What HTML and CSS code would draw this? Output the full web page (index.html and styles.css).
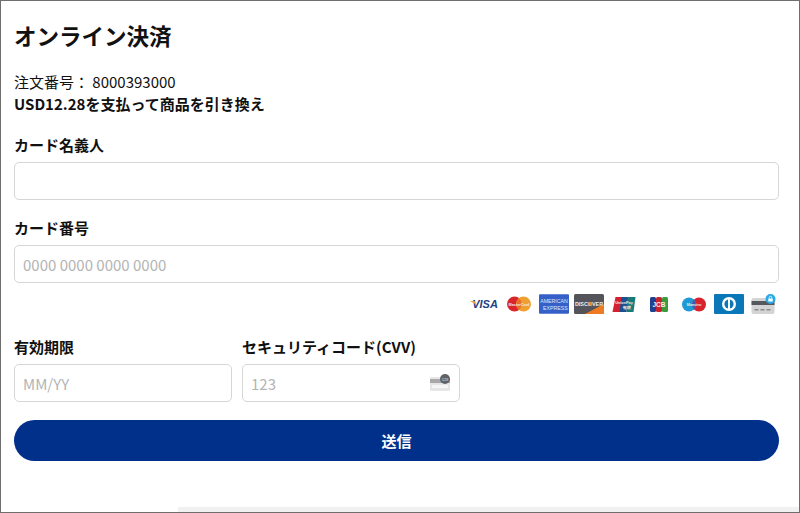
FILE: index.html
```html
<!DOCTYPE html>
<html lang="ja">
<head>
<meta charset="utf-8">
<title>オンライン決済</title>
<link rel="stylesheet" href="styles.css">
</head>
<body>
<div class="frame">
  <form class="form">
    <h1 class="title">オンライン決済</h1>
    <p class="order">注文番号： 8000393000</p>
    <p class="amount">USD12.28を支払って商品を引き換え</p>
    <div class="field field-name">
      <label class="label">カード名義人</label>
      <div class="input"></div>
    </div>
    <div class="field field-number">
      <label class="label">カード番号</label>
      <div class="input"><span class="placeholder">0000 0000 0000 0000</span></div>
    </div>
    <div class="brands">
      <svg class="brand" width="28" height="12" viewBox="0 0 28 12"><text x="15" y="10" text-anchor="middle" class="visa">VISA</text><path d="M0 3h4.500l1.500 3.500z" fill="#e9a23b"/></svg>
      <svg class="brand" width="25" height="16" viewBox="0 0 25 16"><circle cx="8" cy="8" r="7.500" fill="#d9262c"/><circle cx="17" cy="8" r="7.500" fill="#f0a030"/><path d="M12.500 2.200a7.500 7.500 0 0 1 0 11.600a7.500 7.500 0 0 1 0-11.600z" fill="#e8702a"/><text x="12.500" y="9.800" text-anchor="middle" class="tiny fill-light">MasterCard</text></svg>
      <svg class="brand" width="31" height="20" viewBox="0 0 31 20"><rect width="31" height="20" rx="1" fill="#3560c8"/><text x="15.500" y="8.500" text-anchor="middle" class="amex">AMERICAN</text><text x="17" y="16" text-anchor="middle" class="amex">EXPRESS</text></svg>
      <svg class="brand" width="30" height="20" viewBox="0 0 30 20"><rect width="30" height="20" rx="1.500" fill="#54545a"/><path d="M30 10v8.500a1.500 1.500 0 0 1-1.500 1.500H11z" fill="#ee7b22"/><text x="15" y="11.800" text-anchor="middle" class="discover">DISCOVER</text><circle cx="16.500" cy="9.800" r="2" fill="#f08a2c"/></svg>
      <svg class="brand" width="23" height="15" viewBox="0 0 23 15"><path d="M3 0h7l-2 15H0z" fill="#d5202f"/><path d="M9 0h7l-2 15H7z" fill="#1c4f92"/><path d="M15 0h8l-2 15h-7z" fill="#1a7a78"/><text x="11.500" y="6.500" text-anchor="middle" class="tiny fill-light">UnionPay</text><text x="14.500" y="11.500" text-anchor="middle" class="tiny fill-light">银联</text></svg>
      <svg class="brand" width="18" height="15" viewBox="0 0 18 15"><rect width="6" height="15" rx="1.500" fill="#1f3f8f"/><rect x="6" width="6" height="15" rx="1.500" fill="#c8242f"/><rect x="12" width="6" height="15" rx="1.500" fill="#3a9a3c"/><text x="9" y="10" text-anchor="middle" class="jcb">JCB</text></svg>
      <svg class="brand" width="24" height="15" viewBox="0 0 24 15"><circle cx="17" cy="7.500" r="7" fill="#d8232f"/><circle cx="7" cy="7.500" r="7" fill="#1f9ad6"/><path d="M12 2.600a7 7 0 0 1 0 9.800a7 7 0 0 1 0-9.800z" fill="#4a5aa5"/><text x="12" y="9.200" text-anchor="middle" class="tiny fill-light">Maestro</text></svg>
      <svg class="brand" width="30" height="20" viewBox="0 0 30 20"><rect width="30" height="20" rx="1" fill="#0a78b8"/><circle cx="15" cy="10" r="7" fill="#fff"/><circle cx="15" cy="10" r="4.600" fill="#0a78b8"/><rect x="14" y="4" width="2" height="12" fill="#fff"/></svg>
      <svg class="brand" width="25" height="20" viewBox="0 0 25 20"><rect x="0" y="4" width="23" height="16" rx="2" fill="#d4d4d4"/><rect x="0" y="7" width="23" height="4" fill="#55585c"/><rect x="3" y="15" width="4" height="1.500" fill="#8c8c8c"/><rect x="9" y="15" width="4" height="1.500" fill="#8c8c8c"/><rect x="15" y="15" width="4" height="1.500" fill="#8c8c8c"/><circle cx="19" cy="5" r="5" fill="#2aa9e6"/><rect x="16.800" y="4.500" width="4.400" height="3" fill="#fff"/><path d="M17.800 4.500V3.500a1.200 1.200 0 0 1 2.400 0v1" fill="none" stroke="#fff" stroke-width=".8"/></svg>
    </div>
    <div class="pair">
      <div class="col">
        <label class="label">有効期限</label>
        <div class="input"><span class="placeholder">MM/YY</span></div>
      </div>
      <div class="col">
        <label class="label">セキュリティコード(CVV)</label>
        <div class="input input-cvv">
          <span class="placeholder">123</span>
          <svg class="cvv" width="21" height="17" viewBox="0 0 21 17"><rect x="0" y="3" width="20" height="14" rx="1" fill="#e6e6e6"/><rect x="0" y="5" width="20" height="4" fill="#a9a9a9"/><rect x="2" y="11" width="16" height="3" fill="#f6f6f6"/><circle cx="15" cy="5" r="5" fill="#5f6266"/><text x="15" y="6.500" text-anchor="middle" class="cvv-num">123</text></svg>
        </div>
      </div>
    </div>
    <button class="submit" type="button">送信</button>
  </form>
  <div class="scrollbar"></div>
</div>
</body>
</html>
```
FILE: styles.css
```css
* {
  box-sizing: border-box;
}
html, body {
  margin: 0;
  padding: 0;
  height: 100%;
  background: #fff;
}
body {
  font-family: "Noto Sans CJK JP", "Noto Sans", sans-serif;
  color: #111;
  font-size: 15px;
}
.frame {
  height: 513px;
  border: 1px solid #6e6e6e;
  display: flex;
  flex-direction: column;
}
.form {
  flex: 1;
  padding: 19px 20px 0 13px;
  display: flex;
  flex-direction: column;
}
.title {
  margin: 0 0 21px;
  font-size: 22.500px;
  line-height: 30px;
  font-weight: 700;
  color: #111;
}
.order, .amount {
  margin: 0;
  font-size: 15px;
  line-height: 22px;
}
.amount {
  font-weight: 700;
}
.field-name {
  margin-top: 19px;
}
.field-number {
  margin-top: 17px;
}
.label {
  display: block;
  font-size: 15px;
  line-height: 22px;
  font-weight: 700;
  margin-bottom: 6px;
}
.input {
  height: 38px;
  border: 1px solid #d6d6d6;
  border-radius: 5px;
  background: #fff;
  padding: 0 8px;
  display: flex;
  align-items: center;
  justify-content: space-between;
}
.placeholder {
  font-size: 15px;
  color: #b4b4b4;
}
.brands {
  height: 22px;
  margin-top: 10px;
  display: flex;
  justify-content: flex-end;
  align-items: center;
  gap: 5px;
}
.brand {
  width: 30px;
}
.visa {
  font-family: "Liberation Sans", sans-serif;
  font-size: 11px;
  font-weight: 700;
  font-style: italic;
  fill: #23407f;
}
.tiny {
  font-family: "Liberation Sans", sans-serif;
  font-size: 3.800px;
  font-weight: 700;
}
.fill-light {
  fill: #f4e8e0;
}
.amex {
  font-family: "Liberation Sans", sans-serif;
  font-size: 5.400px;
  fill: #dfe7f8;
}
.discover {
  font-family: "Liberation Sans", sans-serif;
  font-size: 5.400px;
  font-weight: 700;
  fill: #eeeeee;
}
.jcb {
  font-family: "Liberation Sans", sans-serif;
  font-size: 6.500px;
  font-weight: 700;
  fill: #f1f1f1;
}
.cvv-num {
  font-family: "Liberation Sans", sans-serif;
  font-size: 4px;
  fill: #e4e4e4;
}
.pair {
  margin-top: 21px;
  display: flex;
  gap: 10px;
}
.col {
  width: 218px;
}
.cvv {
  margin: 0 0 2px;
}
.submit {
  margin-top: 18px;
  height: 41px;
  border: 0;
  border-radius: 20.500px;
  background: #00308a;
  color: #fff;
  font-family: inherit;
  font-size: 15px;
  font-weight: 700;
}
.scrollbar {
  height: 5px;
  margin-left: 177px;
  background: #f1f1f1;
}
```
